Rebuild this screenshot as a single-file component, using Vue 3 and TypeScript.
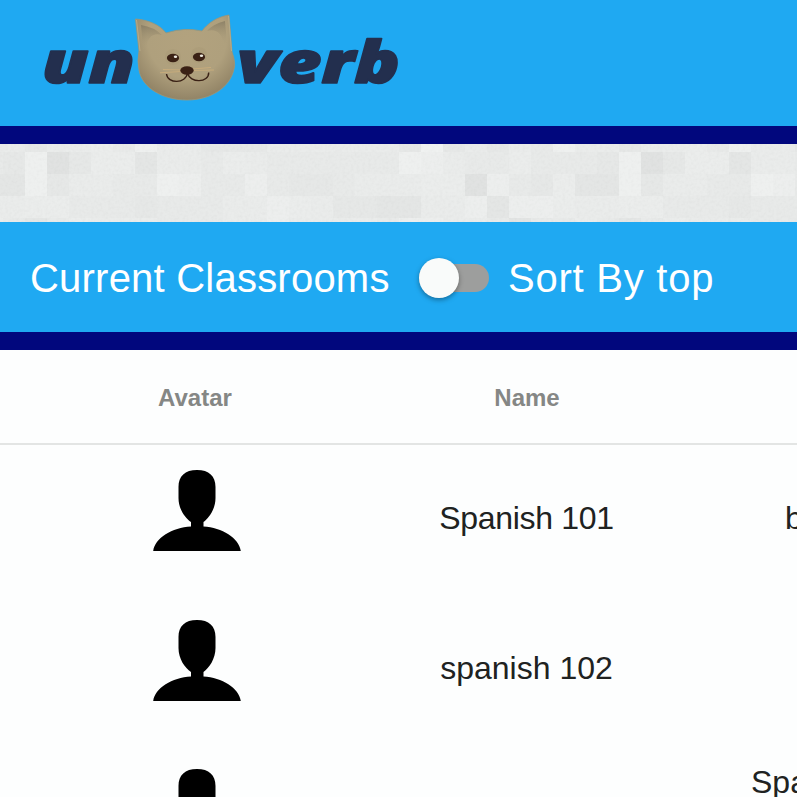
<script setup lang="ts">
interface Row { name: string; note: string; tall?: boolean }

const rows: Row[] = [
  { name: 'Spanish 101', note: 'b' },
  { name: 'spanish 102', note: '' },
  { name: '', note: 'Spa', tall: true },
]

// Tile brightness from 0 (dark) to 9 (light), repeating every 27 tiles
const bands = [
  { y: 0, h: 8, levels: '535564855333555555393535485' },
  { y: 8, h: 22, levels: '380366255465444444875446444' },
  { y: 30, h: 22, levels: '283554487447433455566074362' },
  { y: 52, h: 22, levels: '566444344455765332255727765' },
  { y: 74, h: 4, levels: '424655544455755554775541446' },
]
const tiles = bands.flatMap(({ y, h, levels }) =>
  Array.from({ length: 38 }, (_, i) => {
    const level = Number(levels[(i + 26) % 27])
    const v = 222 + Math.round(level * 1.9)
    return { x: i * 22 - 19, y, h, fill: `rgb(${v},${v + 2},${v + 1})` }
  }),
)
</script>

<template>
  <div class="page">
    <header class="top">
      <svg class="logo" width="370" height="110" viewBox="35 0 370 110" role="img" aria-label="unoverb">
        <defs>
          <radialGradient id="fur" gradientUnits="userSpaceOnUse" cx="187" cy="38" r="66">
            <stop offset="0" stop-color="#b2a27e" />
            <stop offset=".6" stop-color="#afa07d" />
            <stop offset="1" stop-color="#8d7f62" />
          </radialGradient>
          <linearGradient id="ear" x1="0" y1="0" x2="0" y2="1">
            <stop offset="0" stop-color="#7f755e" />
            <stop offset="1" stop-color="#b0a17e" stop-opacity="0" />
          </linearGradient>
        </defs>
        <text class="word" x="42" y="82.500" textLength="93" lengthAdjust="spacingAndGlyphs">un</text>
        <text class="word" x="237" y="82.500" textLength="163" lengthAdjust="spacingAndGlyphs">verb</text>
        <path d="M135.500 19C149 20 160 25 166 33Q184 27 202 31C208 23 217 17 229 15L232 52Q236 63 234 69C230 88 210 100 187 100C163 100 142 88 139 70Q137 61 139 51Z" fill="url(#fur)" stroke="#a09574" stroke-width=".8" />
        <path d="M141 25Q154 27 162 35Q148 31 146 49L143 49Z" fill="url(#ear)" opacity=".7" />
        <path d="M225 21Q213 24 207 31Q221 27 224 45L227 44Z" fill="url(#ear)" opacity=".7" />
        <path d="M136.500 20L140 51M228.500 16L231.500 51" stroke="#b8ab89" stroke-width="1" fill="none" />
        <circle cx="173" cy="57" r="8" fill="#9e9070" opacity=".2" />
        <circle cx="199" cy="55" r="8" fill="#9e9070" opacity=".2" />
        <ellipse cx="173" cy="58" rx="6.100" ry="4.200" fill="#3a2115" />
        <ellipse cx="199" cy="57" rx="6.100" ry="4.200" fill="#3a2115" />
        <ellipse cx="175.500" cy="56.800" rx="1.700" ry="1.300" fill="#eee9df" />
        <ellipse cx="201.500" cy="55.800" rx="1.700" ry="1.300" fill="#eee9df" />
        <path d="M163 69.500L182 70M160 72.800L181 71.500M192 69L211 67.500M192 70.500L214 70" stroke="#c7ac7c" stroke-width="1" fill="none" />
        <path d="M166.500 74C167.500 84 186 84 187.500 73C190 83.500 209 83 208.700 72.500" stroke="#3a2115" stroke-width="1.400" fill="none" />
        <ellipse cx="187" cy="70.500" rx="6.700" ry="4.200" fill="#3a2115" />
      </svg>
    </header>

    <div class="backdrop">
      <svg class="texture" width="797" height="78" viewBox="0 0 797 78" aria-hidden="true">
        <filter id="grain" x="0" y="0" width="100%" height="100%">
          <feTurbulence type="fractalNoise" baseFrequency=".35" numOctaves="2" seed="4" />
          <feColorMatrix type="matrix" values="1 0 0 0 .38  1 0 0 0 .38  1 0 0 0 .38  0 0 0 0 .08" />
        </filter>
        <rect width="797" height="78" fill="#e6e8e6" />
        <rect v-for="(t, i) in tiles" :key="i" :x="t.x" :y="t.y" width="22" :height="t.h" :fill="t.fill" />
        <rect width="797" height="78" filter="url(#grain)" />
      </svg>
    </div>

    <section class="toolbar">
      <h1>Current Classrooms</h1>
      <button class="toggle" type="button" role="switch" aria-checked="false"><span class="knob"></span></button>
      <span class="sort">Sort By top</span>
    </section>

    <main class="table">
      <div class="row head">
        <div class="cell">Avatar</div>
        <div class="cell"><span class="title">Name</span></div>
        <div class="cell"></div>
      </div>
      <div v-for="(row, i) in rows" :key="i" class="row body" :class="{ tall: row.tall }">
        <div class="cell avatar">
          <svg width="90" height="83" viewBox="0 0 90 83">
            <path d="M45 1C57 1 63.500 7 63.500 18V29C63.500 40 57 49 51.500 53V57.500C70 58.500 87 69 88.800 82H1.200C3 69 20 58.500 39 57.500V53C33 49 26.500 40 26.500 29V18C26.500 7 33 1 45 1Z" />
          </svg>
        </div>
        <div class="cell name">{{ row.name }}</div>
        <div class="cell note">{{ row.note }}</div>
      </div>
    </main>
  </div>
</template>

<style>
body { overflow: hidden; }
</style>

<style scoped>
.page {
  width: 100%;
  height: 797px;
  overflow: hidden;
  background: #fdfefe;
  font-family: "Liberation Sans", Arial, sans-serif;
}
.top {
  box-sizing: border-box;
  height: 144px;
  padding-left: 35px;
  background: #1fa9f2;
  border-bottom: 18px solid #01077d;
}
.logo { display: block; }
.word {
  font: italic 800 58px "Open Sans", "Noto Sans", sans-serif;
  fill: #232f4e;
  stroke: #232f4e;
  stroke-width: 1.6;
  stroke-linejoin: round;
}
.backdrop { height: 77.500px; overflow: hidden; }
.texture { display: block; }
.toolbar {
  box-sizing: border-box;
  display: flex;
  align-items: center;
  height: 128px;
  padding: 2px 0 0 30px;
  background: #1fa9f2;
  border-bottom: 18px solid #01077d;
  color: #fff;
  font-size: 40px;
  line-height: 46px;
  white-space: nowrap;
}
h1 {
  width: 389px;
  margin: 0;
  font: inherit;
  letter-spacing: .22px;
}
.toggle {
  display: flex;
  align-items: center;
  width: 70px;
  height: 28px;
  padding: 0;
  border: 0;
  border-radius: 14px;
  background: #9d9e9d;
}
.knob {
  flex: none;
  width: 40px;
  height: 40px;
  border-radius: 50%;
  background: #f9fbfa;
  box-shadow: 0 2px 5px rgba(0, 0, 0, .35);
}
.sort { margin-left: 19px; letter-spacing: .75px; }
.row {
  display: grid;
  grid-template-columns: 361px 299px 330px;
  width: 990px;
}
.cell {
  display: flex;
  align-items: center;
  justify-content: center;
}
.head {
  height: 93.500px;
  border-bottom: 2px solid #e3e5e4;
  color: #858785;
  font-size: 24px;
  font-weight: 700;
}
.head .cell { padding-top: 3px; }
.body .avatar { padding-left: 33px; padding-bottom: 19px; }
.head .cell:first-child { padding-left: 29px; }
.title { margin-left: 33px; }
.body {
  height: 150px;
  color: #202221;
  font-size: 32px;
}
.body .name { padding: 0 0 3px 32px; }
.body:nth-child(2) .name { letter-spacing: -.3px; }
.body .note { justify-content: flex-start; padding: 0 0 3px 125px; }
.tall .cell { align-items: flex-start; }
.tall .avatar { padding-top: 23px; }
.tall .note { padding: 19px 0 0 91px; }
svg { flex: none; }
</style>
